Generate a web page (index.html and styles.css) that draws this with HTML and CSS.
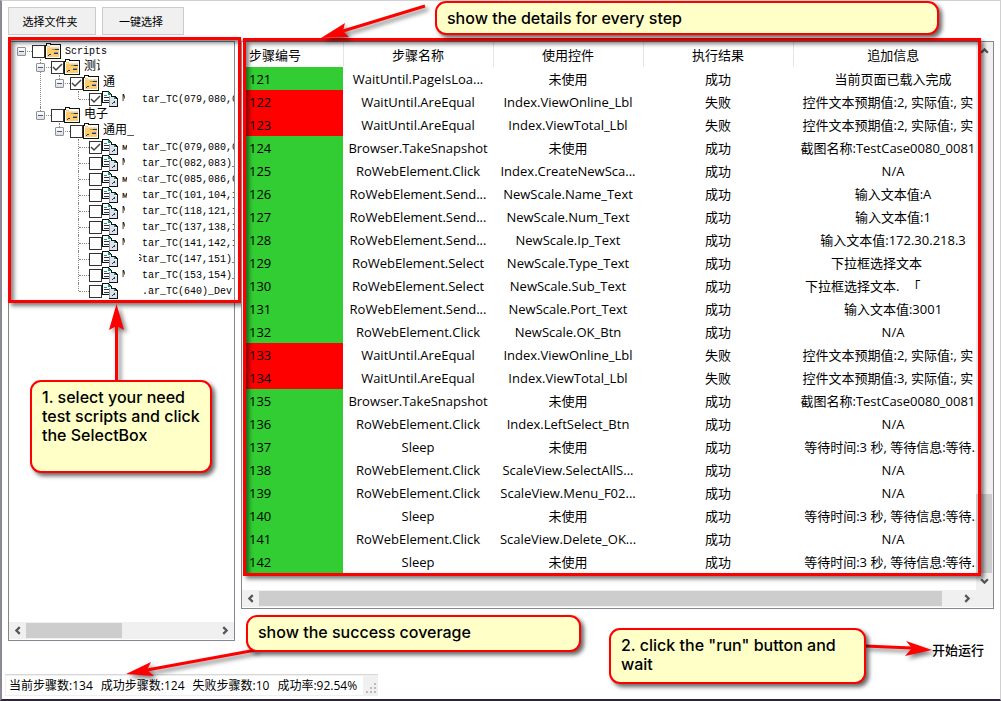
FILE: index.html
```html
<!DOCTYPE html>
<html lang="zh-CN">
<head>
<meta charset="utf-8">
<title>Scripts</title>
<link rel="stylesheet" href="styles.css">
</head>
<body>
<svg width="0" height="0" class="defs" aria-hidden="true">
  <symbol id="folder" viewBox="0 0 16 16" shape-rendering="crispEdges">
    <path fill="#111" d="M1 0h5v1h10v15H0V2h1z"/>
    <path fill="#fff" d="M2 1h3v1h10v13H1V3h1z"/>
    <path fill="#fc6" d="M2 3h3v1h9v10H2z"/>
    <path fill="#fff" d="M6 3h8v1H6z"/>
    <path fill="#fda" d="M2 4h12v1H2z"/>
    <path fill="#236" d="M10 6h4v1h-4zM9 10h4v1H9zM4 11h2v1H4zM3 12h1v1H3z"/>
    <path fill="#79b" d="M7 6h3v1H7zM9 9h4v1H9z"/>
  </symbol>
  <symbol id="docs" viewBox="0 0 16 16" shape-rendering="crispEdges">
    <path fill="#111" d="M0 0h6l4 4v8H0z"/>
    <path fill="#fff" d="M1 1h5v3h3v7H1z"/>
    <path fill="#1a9a78" d="M6 1h1v1h1v1h1v1H6zM2 4h3v1H2z"/>
    <path fill="#235" d="M2 6h5v1H2zM2 9h5v1H2z"/>
    <path fill="#111" d="M8 5h5l3 3v8H7v-1h8V8z"/>
    <path fill="#99a" d="M7 5h1v10H7z"/>
    <path fill="#dde2e6" d="M8 6h5v3h2v6H8z"/>
    <path fill="#1a9a78" d="M12 6h1v1h1v1h-2z"/>
    <path fill="#236" d="M10 12h1v1h-1zM11 11h2v1h-2zM12 10h1v1h-1z"/>
  </symbol>
</svg>
<div class="window">
  <main class="workspace">
    <div class="toolbar">
      <button class="tool" type="button">选择文件夹</button>
      <button class="tool tool-small" type="button">一键选择</button>
    </div>

    <section class="panel scripts">
      <ul class="tree">
        <li class="node"><div class="row"><span class="expander"></span><label class="item"><input type="checkbox" class="check"><svg class="icon"><use href="#folder"/></svg><span class="name">Scripts</span></label></div>
          <ul class="branch">
            <li class="node"><div class="row"><span class="expander"></span><label class="item"><input type="checkbox" class="check" checked><svg class="icon"><use href="#folder"/></svg><span class="name cjk cut">测试</span></label></div>
              <ul class="branch">
                <li class="node"><div class="row"><span class="expander"></span><label class="item"><input type="checkbox" class="check" checked><svg class="icon"><use href="#folder"/></svg><span class="name cjk">通</span></label></div>
                  <ul class="branch">
                    <li class="node"><div class="row"><label class="item"><input type="checkbox" class="check" checked><svg class="icon"><use href="#docs"/></svg><span class="lead"><span class="half">M</span></span><span class="name">tar_TC(079,080,0</span></label></div></li>
                  </ul>
                </li>
              </ul>
            </li>
            <li class="node"><div class="row"><span class="expander"></span><label class="item"><input type="checkbox" class="check"><svg class="icon"><use href="#folder"/></svg><span class="name cjk">电子</span></label></div>
              <ul class="branch">
                <li class="node"><div class="row"><span class="expander"></span><label class="item"><input type="checkbox" class="check"><svg class="icon"><use href="#folder"/></svg><span class="name cjk">通用_</span></label></div>
                  <ul class="branch">
                    <li class="node"><div class="row"><label class="item"><input type="checkbox" class="check" checked><svg class="icon"><use href="#docs"/></svg><span class="lead"><span class="top">M</span></span><span class="name">tar_TC(079,080,0</span></label></div></li>
                    <li class="node"><div class="row"><label class="item"><input type="checkbox" class="check"><svg class="icon"><use href="#docs"/></svg><span class="lead"><span class="half">M</span></span><span class="name">tar_TC(082,083)_</span></label></div></li>
                    <li class="node"><div class="row"><label class="item"><input type="checkbox" class="check"><svg class="icon"><use href="#docs"/></svg><span class="lead"><span class="top">M</span><span class="top faint">S</span></span><span class="name">tar_TC(085,086,0</span></label></div></li>
                    <li class="node"><div class="row"><label class="item"><input type="checkbox" class="check"><svg class="icon"><use href="#docs"/></svg><span class="lead"><span class="top">M</span></span><span class="name">tar_TC(101,104,1</span></label></div></li>
                    <li class="node"><div class="row"><label class="item"><input type="checkbox" class="check"><svg class="icon"><use href="#docs"/></svg><span class="lead"><span class="half">M</span></span><span class="name">tar_TC(118,121,1</span></label></div></li>
                    <li class="node"><div class="row"><label class="item"><input type="checkbox" class="check"><svg class="icon"><use href="#docs"/></svg><span class="lead"><span class="half">M</span></span><span class="name">tar_TC(137,138,1</span></label></div></li>
                    <li class="node"><div class="row"><label class="item"><input type="checkbox" class="check"><svg class="icon"><use href="#docs"/></svg><span class="lead"><span class="half">M</span></span><span class="name">tar_TC(141,142,1</span></label></div></li>
                    <li class="node"><div class="row"><label class="item"><input type="checkbox" class="check"><svg class="icon"><use href="#docs"/></svg><span class="lead"><span class="tail">S</span></span><span class="name">tar_TC(147,151)_</span></label></div></li>
                    <li class="node"><div class="row"><label class="item"><input type="checkbox" class="check"><svg class="icon"><use href="#docs"/></svg><span class="lead"><span class="half">M</span></span><span class="name">tar_TC(153,154)_</span></label></div></li>
                    <li class="node"><div class="row"><label class="item"><input type="checkbox" class="check"><svg class="icon"><use href="#docs"/></svg><span class="lead"></span><span class="name">.ar_TC(640)_Dev.</span></label></div></li>
                  </ul>
                </li>
              </ul>
            </li>
          </ul>
        </li>
      </ul>
      <div class="hscroll">
        <button class="arrow" type="button" aria-label="向左"><svg class="chevron" viewBox="0 0 8 8"><path d="M6 1L3 4l3 3"/></svg></button>
        <div class="track"><div class="thumb thumb-tree"></div></div>
        <button class="arrow" type="button" aria-label="向右"><svg class="chevron" viewBox="0 0 8 8"><path d="M2 1l3 3-3 3"/></svg></button>
      </div>
      <div class="frame"></div>
    </section>

    <div class="results">
      <section class="panel details">
        <div class="body">
          <div class="view">
            <table class="steps">
              <colgroup><col class="c-id"><col class="c"><col class="c"><col class="c"><col class="c-info"></colgroup>
              <thead><tr><th>步骤编号</th><th>步骤名称</th><th>使用控件</th><th>执行结果</th><th>追加信息</th></tr></thead>
              <tbody>
                <tr><td class="ok">121</td><td>WaitUntil.PageIsLoa...</td><td>未使用</td><td>成功</td><td>当前页面已载入完成</td></tr>
                <tr><td class="bad">122</td><td>WaitUntil.AreEqual</td><td>Index.ViewOnline_Lbl</td><td>失败</td><td><span class="option option-full">控件文本预期值:2, 实际值:, 实</span></td></tr>
                <tr><td class="bad">123</td><td>WaitUntil.AreEqual</td><td>Index.ViewTotal_Lbl</td><td>失败</td><td><span class="option option-full">控件文本预期值:2, 实际值:, 实</span></td></tr>
                <tr><td class="ok">124</td><td>Browser.TakeSnapshot</td><td>未使用</td><td>成功</td><td>截图名称:TestCase0080_0081...</td></tr>
                <tr><td class="ok">125</td><td>RoWebElement.Click</td><td>Index.CreateNewSca...</td><td>成功</td><td>N/A</td></tr>
                <tr><td class="ok">126</td><td>RoWebElement.Send...</td><td>NewScale.Name_Text</td><td>成功</td><td>输入文本值:A</td></tr>
                <tr><td class="ok">127</td><td>RoWebElement.Send...</td><td>NewScale.Num_Text</td><td>成功</td><td>输入文本值:1</td></tr>
                <tr><td class="ok">128</td><td>RoWebElement.Send...</td><td>NewScale.Ip_Text</td><td>成功</td><td>输入文本值:172.30.218.3</td></tr>
                <tr><td class="ok">129</td><td>RoWebElement.Select</td><td>NewScale.Type_Text</td><td>成功</td><td><span class="option">下拉框选择文本</span></td></tr>
                <tr><td class="ok">130</td><td>RoWebElement.Select</td><td>NewScale.Sub_Text</td><td>成功</td><td><span class="option option-long"><span>下拉框选择文本.</span><span>「</span></span></td></tr>
                <tr><td class="ok">131</td><td>RoWebElement.Send...</td><td>NewScale.Port_Text</td><td>成功</td><td>输入文本值:3001</td></tr>
                <tr><td class="ok">132</td><td>RoWebElement.Click</td><td>NewScale.OK_Btn</td><td>成功</td><td>N/A</td></tr>
                <tr><td class="bad">133</td><td>WaitUntil.AreEqual</td><td>Index.ViewOnline_Lbl</td><td>失败</td><td><span class="option option-full">控件文本预期值:2, 实际值:, 实</span></td></tr>
                <tr><td class="bad">134</td><td>WaitUntil.AreEqual</td><td>Index.ViewTotal_Lbl</td><td>失败</td><td><span class="option option-full">控件文本预期值:3, 实际值:, 实</span></td></tr>
                <tr><td class="ok">135</td><td>Browser.TakeSnapshot</td><td>未使用</td><td>成功</td><td>截图名称:TestCase0080_0081...</td></tr>
                <tr><td class="ok">136</td><td>RoWebElement.Click</td><td>Index.LeftSelect_Btn</td><td>成功</td><td>N/A</td></tr>
                <tr><td class="ok">137</td><td>Sleep</td><td>未使用</td><td>成功</td><td>等待时间:3 秒, 等待信息:等待...</td></tr>
                <tr><td class="ok">138</td><td>RoWebElement.Click</td><td>ScaleView.SelectAllS...</td><td>成功</td><td>N/A</td></tr>
                <tr><td class="ok">139</td><td>RoWebElement.Click</td><td>ScaleView.Menu_F02...</td><td>成功</td><td>N/A</td></tr>
                <tr><td class="ok">140</td><td>Sleep</td><td>未使用</td><td>成功</td><td>等待时间:3 秒, 等待信息:等待...</td></tr>
                <tr><td class="ok">141</td><td>RoWebElement.Click</td><td>ScaleView.Delete_OK...</td><td>成功</td><td>N/A</td></tr>
                <tr><td class="ok">142</td><td>Sleep</td><td>未使用</td><td>成功</td><td>等待时间:3 秒, 等待信息:等待...</td></tr>
              </tbody>
            </table>
          </div>
          <div class="vscroll">
            <button class="arrow" type="button" aria-label="向上"><svg class="chevron" viewBox="0 0 8 8"><path d="M1 6l3-3 3 3"/></svg></button>
            <div class="track track-v"><div class="thumb-v"></div></div>
            <button class="arrow" type="button" aria-label="向下"><svg class="chevron" viewBox="0 0 8 8"><path d="M1 2l3 3 3-3"/></svg></button>
          </div>
        </div>
        <div class="hscroll">
          <button class="arrow" type="button" aria-label="向左"><svg class="chevron" viewBox="0 0 8 8"><path d="M6 1L3 4l3 3"/></svg></button>
          <div class="track"><div class="thumb thumb-details"></div></div>
          <button class="arrow" type="button" aria-label="向右"><svg class="chevron" viewBox="0 0 8 8"><path d="M2 1l3 3-3 3"/></svg></button>
          <span class="corner"></span>
        </div>
        <div class="frame frame-details"></div>
      </section>
      <button class="run" type="button">开始运行</button>
    </div>
  </main>

  <footer class="status">
    <div class="counts"><span>当前步骤数:134</span><span>成功步骤数:124</span><span>失败步骤数:10</span><span>成功率:92.54%</span></div>
    <svg class="grip" viewBox="0 0 12 12" shape-rendering="crispEdges"><path d="M9 1h2v2H9zM5 5h2v2H5zM9 5h2v2H9zM1 9h2v2H1zM5 9h2v2H5zM9 9h2v2H9z"/></svg>
  </footer>

  <svg class="pointers" viewBox="0 0 1001 701" aria-hidden="true">
    <g><path class="shaft" d="M425 6L343 31"/><path d="M321 38L345 23L343 31L349 37z"/></g>
    <g><path class="shaft" d="M116.500 382V325"/><path d="M116.500 304L124 330L116.500 326L109 330z"/></g>
    <g><path class="shaft" d="M256 650L147 670"/><path d="M126 674L151 662L147 670L154 676z"/></g>
    <g><path class="shaft" d="M865 646L912 648"/><path d="M932 650L906 641L912 648L905 656z"/></g>
  </svg>
  <div class="note note-details">show the details for every step</div>
  <div class="note note-select">1. select your need test scripts and click the SelectBox</div>
  <div class="note note-coverage">show the success coverage</div>
  <div class="note note-run">2. click the "run" button and wait</div>
</div>
</body>
</html>
```
FILE: styles.css
```css
* { box-sizing: border-box; }

body {
  margin: 0;
  background: #fff;
  color: #000;
  font-family: "Open Sans", "Noto Sans CJK SC", sans-serif;
  font-size: 13px;
}

.defs { position: absolute; }

.window {
  position: relative;
  display: flex;
  flex-direction: column;
  min-height: 100vh;
  padding-bottom: 3px;
  border-style: solid;
  border-width: 1px 1px 2px 2px;
  border-color: #d0d0d0 #d0d0d0 #2c2436 #8c8896;
  overflow: hidden;
}

.workspace {
  flex: 1;
  display: grid;
  grid-template-columns: 227px minmax(0, 1fr);
  grid-template-rows: 28px 1fr;
  gap: 6px;
  padding: 6px 6px 0;
}

.toolbar {
  grid-column: 1 / -1;
  display: flex;
  gap: 6px;
}

button { font-family: inherit; color: inherit; }

.tool {
  width: 88px;
  padding: 0 4px 0 0;
  border: 1px solid #ccc;
  background: #f0f0f0;
  font-size: 11px;
}

.tool-small { width: 82px; }

.panel {
  position: relative;
  display: flex;
  flex-direction: column;
  border: 1px solid #828790;
  background: #fff;
}

.scripts {
  justify-content: space-between;
  margin-bottom: 33px;
}

/* script tree */
.tree, .branch { list-style: none; margin: 0; }

.tree {
  padding: 1px 0 0 7px;
  overflow: hidden;
  font-family: "Liberation Mono", "Noto Sans CJK SC", monospace;
  font-size: 10px;
}

.branch { padding: 0 0 0 19px; }

.node { position: relative; }

.branch > .node::before {
  content: "";
  position: absolute;
  top: 0;
  bottom: 0;
  left: 5px;
  border-left: 1px dotted #888;
}

.branch > .node:last-child::before { bottom: auto; height: 8px; }

.row {
  position: relative;
  display: flex;
  align-items: center;
  height: 16px;
  padding-left: 16px;
  white-space: nowrap;
}

.row::before {
  content: "";
  position: absolute;
  top: 8px;
  left: 6px;
  width: 10px;
  border-top: 1px dotted #888;
}

.expander {
  position: absolute;
  top: 4px;
  left: 1px;
  width: 9px;
  height: 9px;
  border: 1px solid #919191;
  border-radius: 1px;
  background: linear-gradient(#3c5a9c, #3c5a9c) center / 5px 1px no-repeat, linear-gradient(#fff, #ddd);
}

.item { display: flex; align-items: center; min-width: 0; overflow: hidden; }

.check {
  appearance: none;
  flex: none;
  width: 13px;
  height: 13px;
  margin: 0;
  border: 1px solid #333;
  background: #fff;
}

.check:checked {
  background: url("data:image/svg+xml,%3Csvg xmlns='http://www.w3.org/2000/svg' viewBox='0 0 11 11'%3E%3Cpath d='M1 5l3 3 6-6' fill='none' stroke='%23444' stroke-width='1.500'/%3E%3C/svg%3E");
}

.icon { flex: none; width: 16px; height: 16px; }

.name { padding-left: 4px; }
.lead + .name { padding-left: 0; overflow: hidden; }
.cjk { font-size: 12px; line-height: 16px; }
.cut { width: 20px; overflow: hidden; }

.lead {
  flex: none;
  display: flex;
  justify-content: space-between;
  width: 24px;
  padding-left: 4px;
  line-height: 12px;
}

.half { width: 3px; overflow: hidden; }
.top { width: 5px; height: 6px; overflow: hidden; line-height: 12px; }
.faint { opacity: 0.5; }
.tail { width: 3px; margin-left: auto; overflow: hidden; direction: rtl; }

/* scroll bars */
.hscroll, .vscroll { display: flex; background: #f0f0f0; }
.hscroll { height: 17px; margin-bottom: 1px; }
.vscroll { flex: none; flex-direction: column; width: 17px; }

.arrow {
  flex: none;
  display: flex;
  align-items: center;
  justify-content: center;
  width: 17px;
  height: 17px;
  padding: 0;
  border: 0;
  background: none;
}

.chevron {
  width: 9px;
  height: 9px;
  fill: none;
  stroke: #555;
  stroke-width: 2;
}

.track { flex: 1; display: flex; padding: 1px 0; }
.thumb { background: #cdcdcd; }
.thumb-tree { width: 50%; }
.thumb-details { flex: 1; margin-right: 17px; }
.track-v { flex-direction: column; justify-content: flex-end; padding: 0 1px 0 0; }
.thumb-v { height: 79px; background: #cdcdcd; }
.corner { width: 17px; }

/* step table */
.results {
  display: flex;
  flex-direction: column;
  align-items: flex-end;
  min-width: 0;
}

.details { width: 100%; }
.body { display: flex; }

.view {
  flex: 1;
  min-width: 0;
  padding: 0 0 17px 1px;
  overflow: hidden;
}

.steps {
  width: 100%;
  min-width: 750px;
  table-layout: fixed;
  border-collapse: collapse;
  line-height: 18px;
}

.c-id { width: 100px; }
.c { width: 20%; }
.c-info { width: 200px; }

.steps th, .steps td {
  height: 23px;
  padding: 0;
  text-align: center;
  font-weight: 400;
  white-space: nowrap;
}

.steps th { height: 25px; border-right: 1px solid #e5e5e5; }
.steps th:last-child { border-right: 0; }
.steps th:first-child, .steps td:first-child { padding-left: 6px; text-align: left; }

.ok { background: #32cd32; }
.bad { background: #f00; }

.option {
  display: inline-flex;
  gap: 8px;
  width: 124px;
}

.option-long { width: 176px; }
.option-full { width: 181px; }

.run {
  height: 20px;
  margin: 30px 10px 0 0;
  padding: 0;
  border: 0;
  background: none;
  font-size: 13px;
  font-weight: 500;
}

/* status bar */
.status {
  align-self: flex-start;
  display: flex;
  align-items: flex-end;
  height: 22px;
  margin-left: 3px;
  border-top: 1px solid #d7d7d7;
  background: #f0f0f0;
}

.counts {
  display: flex;
  gap: 8px;
  margin: 1px 0 1px 1px;
  padding: 0 6px 0 3px;
  background: #fff;
  font-size: 12px;
  line-height: 19px;
}

.grip { width: 12px; height: 12px; margin: 0 1px 2px 2px; fill: #bbb; }

/* annotations */
.frame {
  position: absolute;
  top: -5px;
  left: -1px;
  width: 233px;
  height: 266px;
  border: 3px solid #f00;
  box-shadow: 3px 3px 4px rgba(0, 0, 0, 0.5), inset 3px 3px 4px rgba(0, 0, 0, 0.5);
}

.frame-details {
  top: -4px;
  left: 1px;
  right: 12px;
  width: auto;
  height: 538px;
}

.pointers {
  position: absolute;
  top: -1px;
  left: -2px;
  width: 1001px;
  height: 701px;
  pointer-events: none;
  fill: #f00;
  filter: drop-shadow(3px 3px 2px rgba(0, 0, 0, 0.5));
}

.shaft { fill: none; stroke: #f00; stroke-width: 3; }

.note {
  position: absolute;
  padding: 6px 10px;
  border: 2px solid #f00;
  border-radius: 11px;
  background: #ffffc8;
  box-shadow: 3px 3px 4px rgba(0, 0, 0, 0.6);
  font: 500 16px/19px Inter, "Liberation Sans", sans-serif;
}

.note-details { top: 0; left: 433px; width: 504px; height: 34px; }
.note-select { top: 379px; left: 28px; width: 182px; height: 93px; }
.note-coverage { top: 614px; left: 244px; width: 335px; height: 37px; }
.note-run { top: 627px; left: 607px; width: 257px; height: 56px; }
```
